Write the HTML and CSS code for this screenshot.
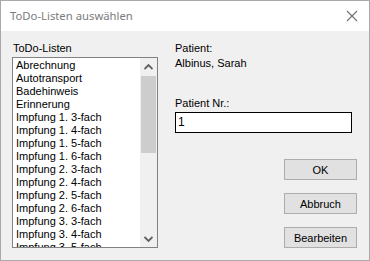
FILE: index.html
```html
<!DOCTYPE html>
<html lang="de">
<head>
<meta charset="utf-8">
<title>ToDo-Listen auswählen</title>
<link rel="stylesheet" href="styles.css">
</head>
<body>
<div class="window">
  <div class="titlebar">
    <span class="title">ToDo-Listen auswählen</span>
    <svg class="close" width="12" height="12" viewBox="0 0 12 12"><path d="M1 1 L11 11 M11 1 L1 11" stroke="#6f6f6f" stroke-width="1.1" fill="none"/></svg>
  </div>
  <div class="content">
    <div class="left">
      <div class="label">ToDo-Listen</div>
      <div class="listbox">
        <ul class="items">
          <li>Abrechnung</li>
          <li>Autotransport</li>
          <li>Badehinweis</li>
          <li>Erinnerung</li>
          <li>Impfung 1. 3-fach</li>
          <li>Impfung 1. 4-fach</li>
          <li>Impfung 1. 5-fach</li>
          <li>Impfung 1. 6-fach</li>
          <li>Impfung 2. 3-fach</li>
          <li>Impfung 2. 4-fach</li>
          <li>Impfung 2. 5-fach</li>
          <li>Impfung 2. 6-fach</li>
          <li>Impfung 3. 3-fach</li>
          <li>Impfung 3. 4-fach</li>
          <li>Impfung 3. 5-fach</li>
        </ul>
        <div class="scrollbar">
          <div class="arrow">
            <svg width="9" height="6" viewBox="0 0 9 6"><path d="M0.5 5 L4.5 1 L8.5 5" stroke="#606060" stroke-width="1.8" fill="none"/></svg>
          </div>
          <div class="track">
            <div class="thumb"></div>
          </div>
          <div class="arrow">
            <svg width="9" height="6" viewBox="0 0 9 6"><path d="M0.5 1 L4.5 5 L8.5 1" stroke="#606060" stroke-width="1.8" fill="none"/></svg>
          </div>
        </div>
      </div>
    </div>
    <div class="right">
      <div class="label">Patient:</div>
      <div class="label name">Albinus, Sarah</div>
      <div class="label nr">Patient Nr.:</div>
      <div class="input">1</div>
      <div class="buttons">
        <div class="btn">OK</div>
        <div class="btn">Abbruch</div>
        <div class="btn">Bearbeiten</div>
      </div>
    </div>
  </div>
</div>
</body>
</html>
```

FILE: styles.css
```css
html, body {
  margin: 0;
  padding: 0;
}
body {
  width: 370px;
  height: 261px;
  overflow: hidden;
  font-family: "Liberation Sans", Arial, sans-serif;
  font-size: 11px;
  color: #000;
}
.window {
  box-sizing: border-box;
  width: 370px;
  height: 261px;
  border: 1px solid #a9a9a9;
  background: #f0f0f0;
  display: flex;
  flex-direction: column;
}
.titlebar {
  height: 30px;
  background: #fff;
  display: flex;
  align-items: center;
  justify-content: space-between;
  padding: 0 10px 0 9px;
  flex: none;
}
.title {
  font-family: "Noto Sans", "Open Sans", sans-serif;
  font-size: 11.3px;
  color: #7b7b7b;
  position: relative;
  top: -1px;
}
.close {
  display: block;
  margin-right: 1px;
}
.content {
  display: flex;
  padding: 11px 0 0 11px;
}
.label {
  line-height: 13px;
  height: 13px;
  white-space: nowrap;
}
.left {
  width: 146px;
  flex: none;
}
.left .label {
  margin-left: 1px;
  margin-bottom: 2px;
}
.listbox {
  box-sizing: border-box;
  width: 146px;
  height: 191px;
  border: 1px solid #828282;
  background: #fff;
  display: flex;
  overflow: hidden;
}
.items {
  list-style: none;
  margin: 0;
  padding: 1px 0 0 3px;
  flex: 1;
  overflow: hidden;
}
.items li {
  line-height: 13px;
  height: 13px;
  white-space: nowrap;
}
.scrollbar {
  width: 17px;
  flex: none;
  background: #f0f0f0;
  display: flex;
  flex-direction: column;
}
.arrow {
  height: 17px;
  display: flex;
  align-items: center;
  justify-content: center;
  flex: none;
}
.track {
  flex: 1;
}
.thumb {
  margin: 1px 1px 0 1px;
  height: 77px;
  background: #cdcdcd;
}
.right {
  margin-left: 17px;
  width: 182px;
  flex: none;
  display: flex;
  flex-direction: column;
}
.name {
  margin-top: 2px;
}
.nr {
  margin-top: 27px;
}
.input {
  box-sizing: border-box;
  margin-top: 2px;
  width: 177px;
  height: 21px;
  border: 1px solid #000;
  background: #fff;
  line-height: 19px;
  padding-left: 2px;
  font-size: 12px;
}
.buttons {
  display: flex;
  flex-direction: column;
  align-items: flex-end;
  gap: 13px;
  margin-top: 26px;
}
.btn {
  box-sizing: border-box;
  width: 73px;
  height: 21px;
  border: 1px solid #adadad;
  background: #e1e1e1;
  display: flex;
  align-items: center;
  justify-content: center;
  font-size: 11px;
}
```
